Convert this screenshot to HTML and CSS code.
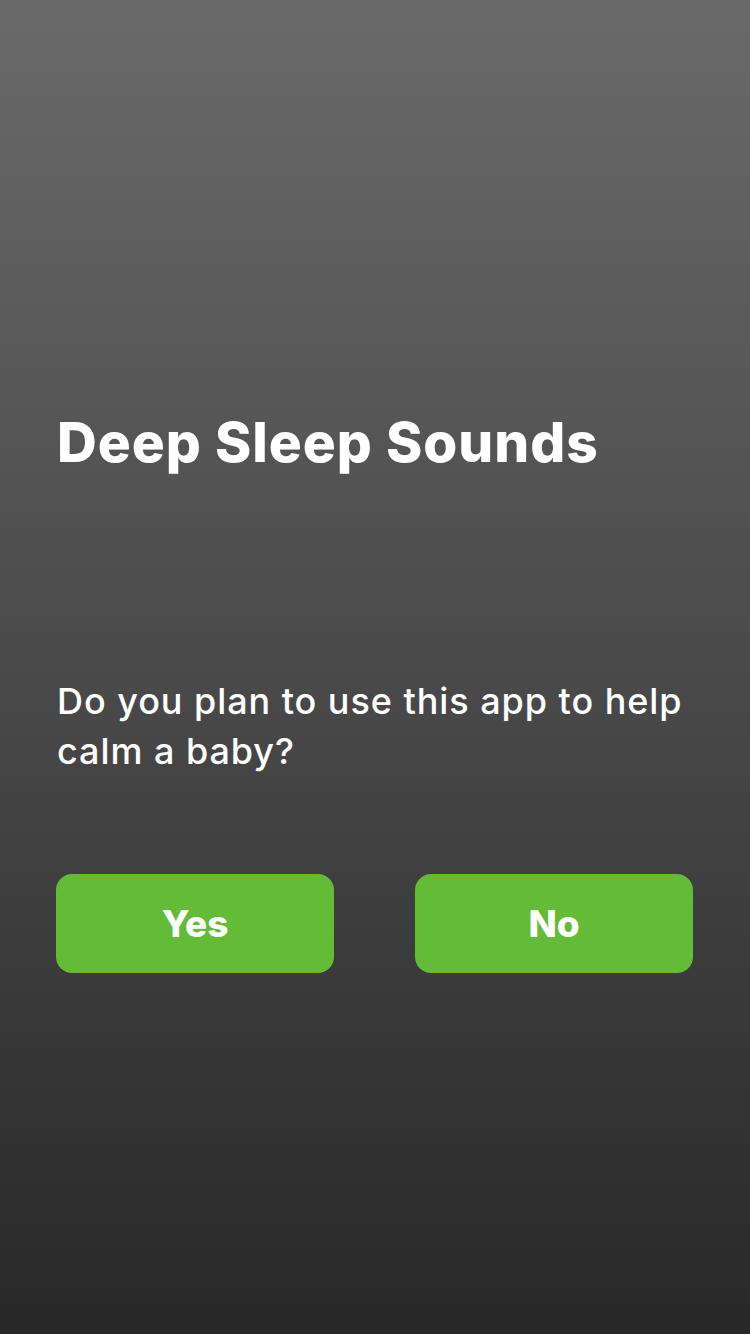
FILE: index.html
```html
<!DOCTYPE html>
<html lang="en">
<head>
<meta charset="utf-8">
<meta name="viewport" content="width=750">
<title>Deep Sleep Sounds</title>
<link rel="stylesheet" href="styles.css">
</head>
<body>
<main class="screen">
  <h1 class="title">Deep Sleep Sounds</h1>
  <p class="question">Do you plan to use this app to help calm a baby?</p>
  <div class="actions">
    <button class="btn" type="button">Yes</button>
    <button class="btn" type="button">No</button>
  </div>
</main>
</body>
</html>
```

FILE: styles.css
```css
html, body {
  margin: 0;
  padding: 0;
}
body {
  width: 750px;
  height: 1334px;
  background: linear-gradient(to bottom, #6a6a6a 0%, #4a4a4a 50%, #282828 100%);
  font-family: Inter, "Noto Sans", sans-serif;
  color: #ffffff;
  overflow: hidden;
}
.screen {
  box-sizing: border-box;
  height: 1334px;
  padding: 409px 40px 0 57px;
  display: flex;
  flex-direction: column;
}
.title {
  margin: 0;
  font-size: 55px;
  line-height: 66px;
  font-weight: 800;
  letter-spacing: 1px;
}
.question {
  margin: 201px 0 0 0;
  font-size: 36px;
  line-height: 50px;
  font-weight: 500;
  letter-spacing: 0.95px;
}
.actions {
  margin-top: 98px;
  margin-left: -1px;
  display: flex;
  gap: 81px;
}
.btn {
  width: 278px;
  height: 99px;
  border: none;
  border-radius: 16px;
  background: #63bb38;
  color: #ffffff;
  font-family: Inter, "Noto Sans", sans-serif;
  font-size: 37px;
  font-weight: 800;
  padding: 0;
}
```
